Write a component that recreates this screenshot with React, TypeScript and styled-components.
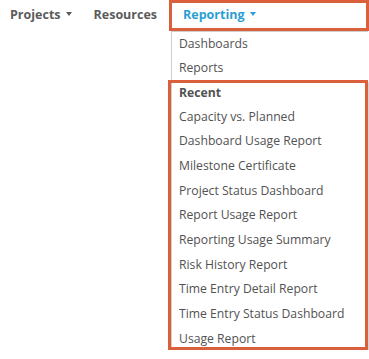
import React from "react";
import styled, { createGlobalStyle } from "styled-components";

const GlobalStyle = createGlobalStyle`
  html, body {
    margin: 0;
    padding: 0;
    background: #fff;
  }
  body {
    font-family: "Open Sans", "Noto Sans", sans-serif;
    -webkit-font-smoothing: antialiased;
  }
`;

const ACCENT = "#d9603b";

const recent = [
  "Capacity vs. Planned",
  "Dashboard Usage Report",
  "Milestone Certificate",
  "Project Status Dashboard",
  "Report Usage Report",
  "Reporting Usage Summary",
  "Risk History Report",
  "Time Entry Detail Report",
  "Time Entry Status Dashboard",
  "Usage Report",
];

const App = () => {
  return (
    <>
      <GlobalStyle />
      <Page>
        <NavBar>
          <NavItem>
            Projects <Caret />
          </NavItem>
          <NavItem>Resources</NavItem>
          <ActiveTab>
            <NavItem $active>
              Reporting <Caret />
            </NavItem>
          </ActiveTab>
        </NavBar>
        <Menu>
          <MenuItem>Dashboards</MenuItem>
          <MenuItem>Reports</MenuItem>
          <Group>
            <GroupHeader>Recent</GroupHeader>
            {recent.map((r) => (
              <MenuItem key={r} $tall>
                {r}
              </MenuItem>
            ))}
          </Group>
        </Menu>
      </Page>
    </>
  );
};

const Page = styled.div`
  display: flex;
  flex-direction: column;
  width: 369px;
`;

const NavBar = styled.nav`
  display: flex;
  align-items: stretch;
  height: 31px;
  padding-left: 10px;
`;

const NavItem = styled.div<{ $active?: boolean }>`
  display: flex;
  align-items: center;
  gap: 5px;
  margin-right: 22px;
  padding-bottom: 2px;
  font-size: 12.5px;
  font-weight: 700;
  color: ${(p) => (p.$active ? "#2b9fd3" : "#5b5b5b")};
  white-space: nowrap;
`;

const Caret = styled.span`
  display: inline-block;
  width: 0;
  height: 0;
  border-left: 3.5px solid transparent;
  border-right: 3.5px solid transparent;
  border-top: 4px solid currentColor;
  margin-bottom: 2px;
`;

const ActiveTab = styled.div`
  display: flex;
  flex: none;
  box-sizing: border-box;
  width: 200px;
  height: 31px;
  margin-left: -10px;
  padding-left: 11px;
  border: 3px solid ${ACCENT};
`;

const Menu = styled.div`
  display: flex;
  flex-direction: column;
  margin-left: 171px;
  width: 197px;
  box-sizing: border-box;
  border-top: 1px solid #cfcfcf;
  border-left: 1px solid #cfcfcf;
  background: #fff;
`;

const MenuItem = styled.div<{ $tall?: boolean }>`
  height: ${(p) => (p.$tall ? "24.7px" : "24px")};
  line-height: ${(p) => (p.$tall ? "24.7px" : "24px")};
  padding-left: 7px;
  font-size: 12.2px;
  color: #525252;
  white-space: nowrap;
`;

const GroupHeader = styled(MenuItem)`
  font-weight: 700;
  height: 24px;
  line-height: 24px;
`;

const Group = styled.div`
  position: relative;
  box-sizing: border-box;
  height: 270px;
  padding-top: 0.5px;

  &::after {
    content: "";
    position: absolute;
    top: 0;
    left: -4px;
    right: 0;
    bottom: 0;
    border: 3px solid ${ACCENT};
    box-shadow: 1px 2px 2px rgba(0, 0, 0, 0.25);
    pointer-events: none;
  }
`;

export default App;
